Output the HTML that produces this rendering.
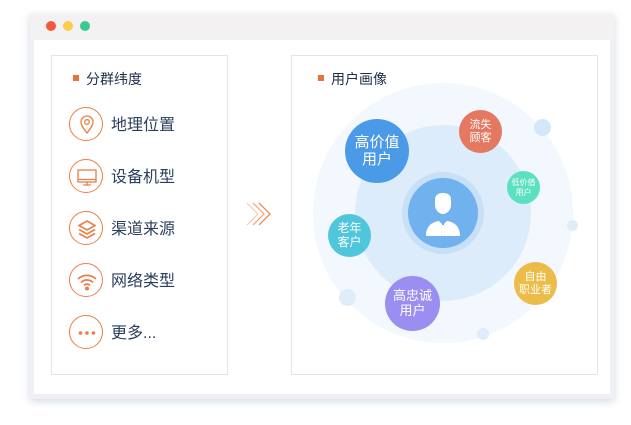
<!DOCTYPE html>
<html><head><meta charset="utf-8"><style>
*{margin:0;padding:0;box-sizing:border-box}
body{width:631px;height:425px;background:#fff;position:relative;overflow:hidden;font-family:"Liberation Sans","Noto Sans CJK SC",sans-serif}
.win{position:absolute;left:30px;top:14px;width:584px;height:385px;background:#eef0f3;box-shadow:0 2px 8px rgba(120,140,170,.35)}
.bar{position:absolute;left:0;top:0;width:584px;height:26px;background:#f3f1f1}
.dot{position:absolute;top:7px;width:10px;height:10px;border-radius:50%}
.content{position:absolute;left:4px;top:26px;width:576px;height:354px;background:#fff}
.panel{position:absolute;border:1px solid #e2e4e8;background:#fff}
.ttl{position:absolute;font-size:14px;color:#1e2f4a}
.ttl:before{content:"";position:absolute;left:-13px;top:6px;width:6px;height:6px;background:#e8733a}
.row{position:absolute;left:69px;height:34px}
.ic{position:absolute;left:0;top:0;width:34px;height:34px;border:1.3px solid #ec7d45;border-radius:50%}
.ic svg{position:absolute;left:0;top:0}
.lbl{position:absolute;left:42px;top:4px;font-size:16px;color:#2b3f5c;white-space:nowrap}
.c{position:absolute;border-radius:50%}
.b{position:absolute;border-radius:50%;color:#fff;text-align:center;display:flex;align-items:center;justify-content:center;line-height:1.15}
</style></head><body>
<div class="win">
<div class="bar"><div class="dot" style="left:16px;background:#f25a3f"></div><div class="dot" style="left:33px;background:#f8ce4e"></div><div class="dot" style="left:50px;background:#3cc98f"></div></div>
<div class="content"></div>
</div>
<div class="panel" style="left:51px;top:55px;width:177px;height:320px"></div>
<div class="panel" style="left:291px;top:55px;width:307px;height:320px"></div>
<div class="ttl" style="left:86px;top:69px">分群纬度</div>
<div class="ttl" style="left:331px;top:69px">用户画像</div>

<div class="row" style="top:107px"><div class="ic"><svg width="34" height="34" viewBox="0 0 34 34" fill="none" stroke="#ec7d45" stroke-width="1.3"><path d="M17 25c-4-5-6-8-6-11a6 6 0 0 1 12 0c0 3-2 6-6 11z"/><circle cx="17" cy="14" r="2.3"/></svg></div><div class="lbl">地理位置</div></div>
<div class="row" style="top:159px"><div class="ic"><svg width="34" height="34" viewBox="0 0 34 34" fill="none" stroke="#ec7d45" stroke-width="1.3"><rect x="8" y="10" width="18" height="12"/><line x1="8" y1="19.5" x2="26" y2="19.5"/><path d="M17 22v3M13 25h8"/></svg></div><div class="lbl">设备机型</div></div>
<div class="row" style="top:211px"><div class="ic"><svg width="34" height="34" viewBox="0 0 34 34" fill="none" stroke="#ec7d45" stroke-width="1.6"><path d="M17 9l8 4.5-8 4.5-8-4.5z"/><path d="M9 17.5l8 4.5 8-4.5"/><path d="M9 21.5l8 4.5 8-4.5"/></svg></div><div class="lbl">渠道来源</div></div>
<div class="row" style="top:263px"><div class="ic"><svg width="34" height="34" viewBox="0 0 34 34" fill="none" stroke="#ec7d45" stroke-width="1.7"><path d="M8 15a13 13 0 0 1 18 0"/><path d="M11 18.5a8.5 8.5 0 0 1 12 0"/><path d="M14 21.5a4 4 0 0 1 6 0"/><circle cx="17" cy="24.5" r="1.2" fill="#ec7d45"/></svg></div><div class="lbl">网络类型</div></div>
<div class="row" style="top:315px"><div class="ic"><svg width="34" height="34" viewBox="0 0 34 34" fill="#ec7d45"><circle cx="10.5" cy="17" r="1.8"/><circle cx="17" cy="17" r="1.8"/><circle cx="23.5" cy="17" r="1.8"/></svg></div><div class="lbl">更多...</div></div>

<svg style="position:absolute;left:244px;top:201px" width="30" height="26" viewBox="0 0 30 26" fill="none" stroke-width="1.2"><path d="M3 2l11 11-11 11" stroke="#f8c8b0"/><path d="M9 2l11 11-11 11" stroke="#f2a27a"/><path d="M15 2l11 11-11 11" stroke="#ec7d45"/></svg>

<div class="c" style="left:313px;top:83px;width:260px;height:260px;background:#f2f8fd"></div>
<div class="c" style="left:355px;top:125px;width:176px;height:176px;background:#dcecfa"></div>
<div class="c" style="left:402px;top:172px;width:82px;height:82px;background:#c7e0f7"></div>
<div class="c" style="left:408px;top:178px;width:70px;height:70px;background:#6fb2ee"></div>
<svg style="position:absolute;left:408px;top:178px" width="70" height="70" viewBox="0 0 70 70" fill="#fff"><path d="M27 22c0-5 3-7 8-7s8 2 8 7v5c0 5-4 9-8 9s-8-4-8-9z"/><path d="M18 58c0-10 6-14 13-15l3 3-1 12zM52 58c0-10-6-14-13-15l-3 3 1 12z"/><path d="M34 47h2l1 11h-4z"/></svg>
<div class="c" style="left:534px;top:119px;width:17px;height:17px;background:#d3e7f9"></div>
<div class="c" style="left:567px;top:220px;width:11px;height:11px;background:#deedfa"></div>
<div class="c" style="left:339px;top:289px;width:17px;height:17px;background:#deedfa"></div>
<div class="c" style="left:477px;top:328px;width:12px;height:12px;background:#deedfa"></div>
<div class="b" style="left:345px;top:119px;width:64px;height:64px;background:#4a9ae8;font-size:15px">高价值<br>用户</div>
<div class="b" style="left:459px;top:110px;width:43px;height:43px;background:#e57860;font-size:11px">流失<br>顾客</div>
<div class="b" style="left:507px;top:171px;width:33px;height:33px;background:#5de0bf;font-size:8px">低价值<br>用户</div>
<div class="b" style="left:328px;top:214px;width:43px;height:43px;background:#4fc6dc;font-size:12px">老年<br>客户</div>
<div class="b" style="left:385px;top:276px;width:55px;height:55px;background:#9a8ff0;font-size:13px">高忠诚<br>用户</div>
<div class="b" style="left:514px;top:262px;width:43px;height:43px;background:#ebbd48;font-size:11px">自由<br>职业者</div>
</body></html>
